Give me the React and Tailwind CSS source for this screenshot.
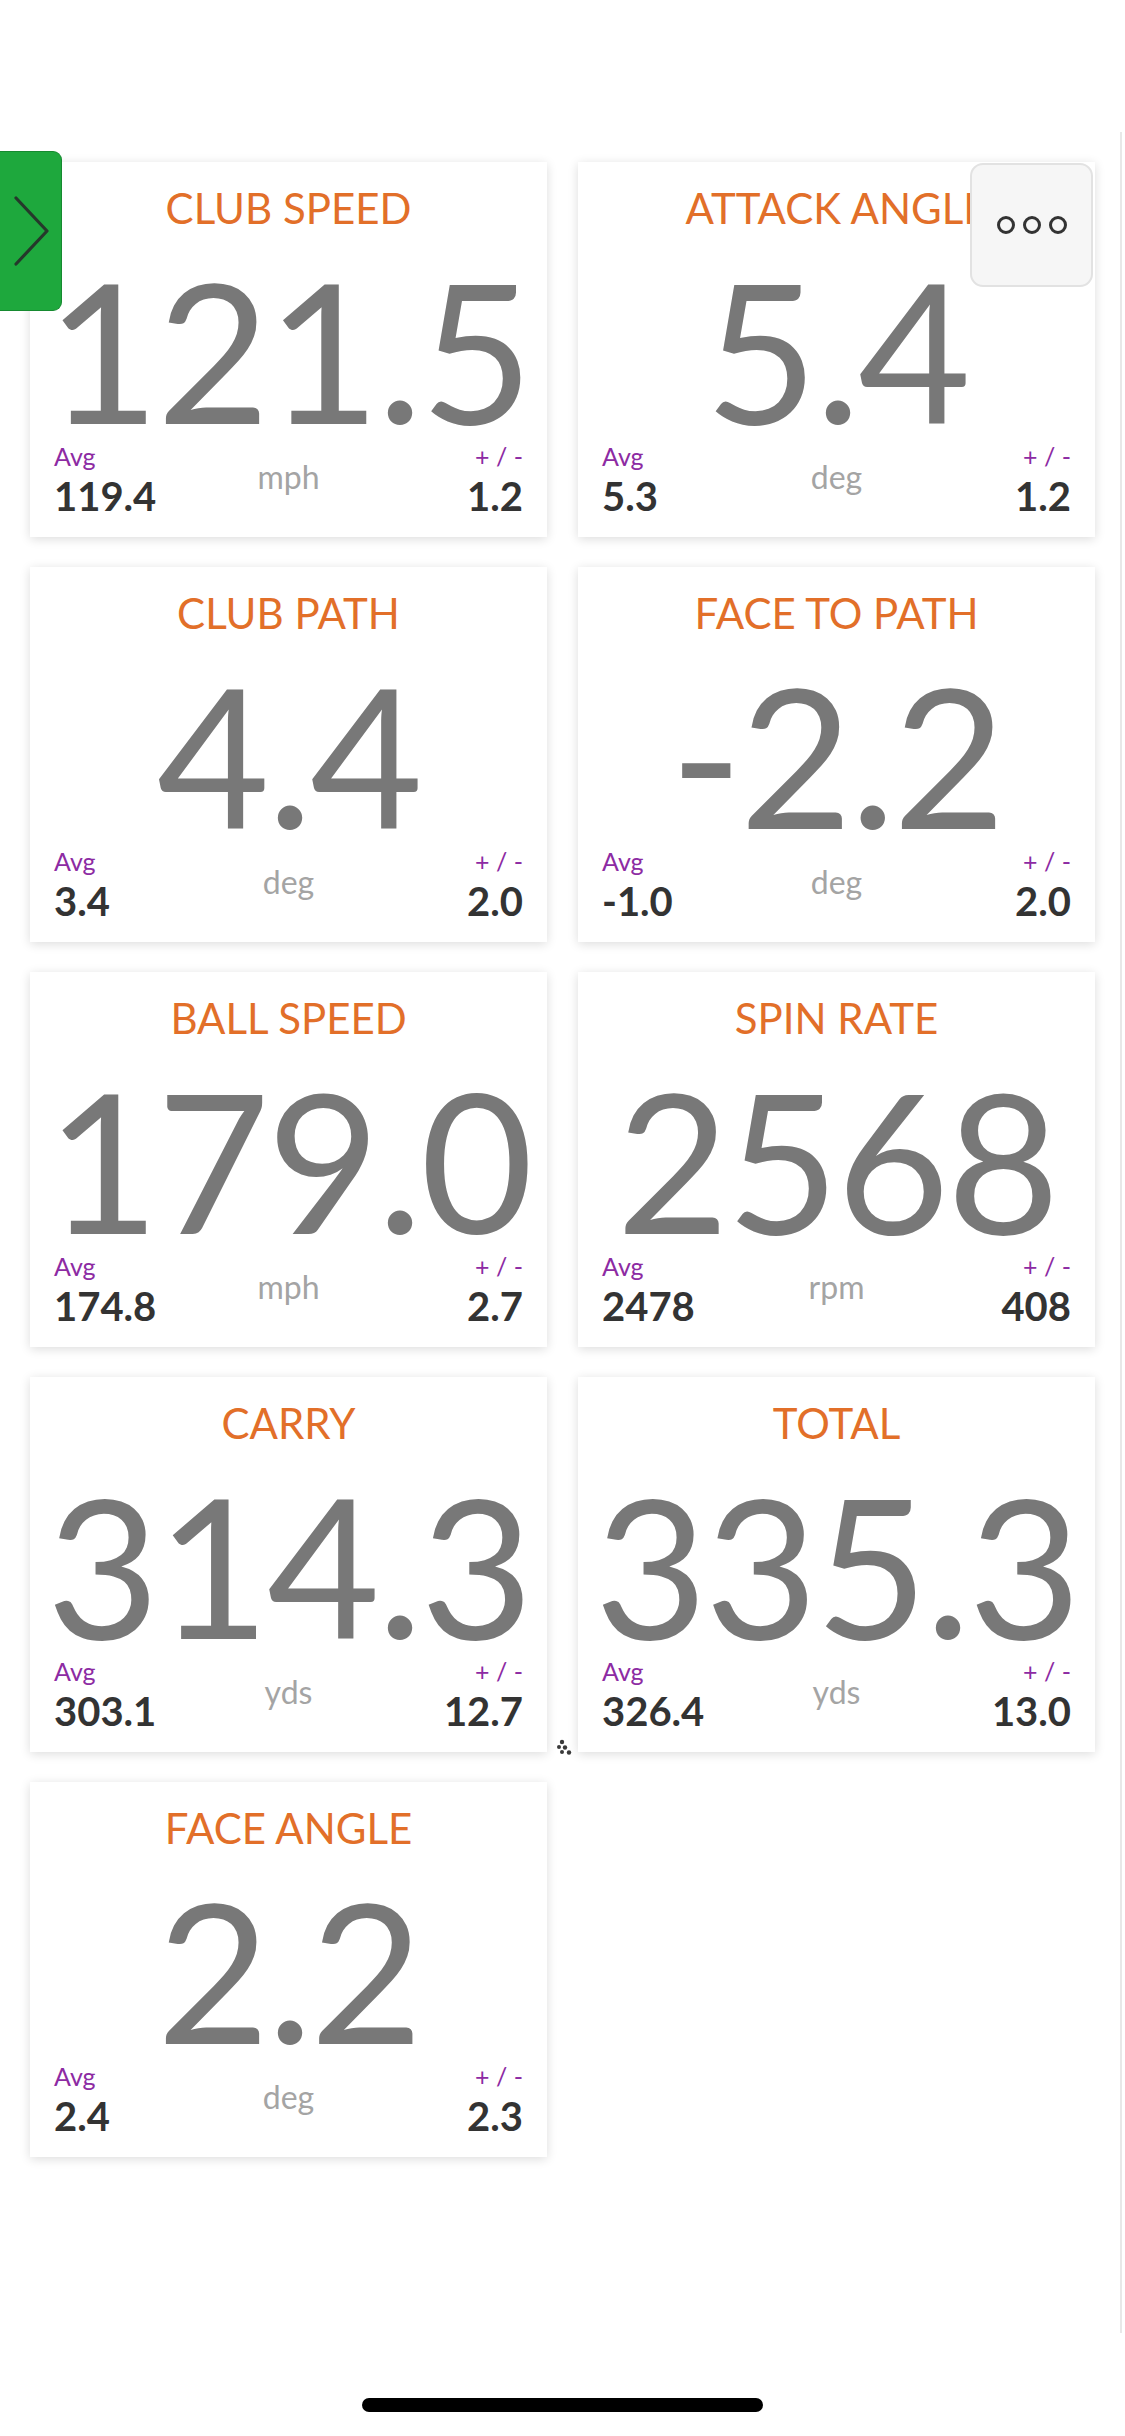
import React from 'react';

const metrics = [
    { title: 'CLUB SPEED', value: '121.5', unit: 'mph', avg: '119.4', dev: '1.2' },
    { title: 'ATTACK ANGLE', value: '5.4', unit: 'deg', avg: '5.3', dev: '1.2' },
    { title: 'CLUB PATH', value: '4.4', unit: 'deg', avg: '3.4', dev: '2.0' },
    { title: 'FACE TO PATH', value: '-2.2', unit: 'deg', avg: '-1.0', dev: '2.0' },
    { title: 'BALL SPEED', value: '179.0', unit: 'mph', avg: '174.8', dev: '2.7' },
    { title: 'SPIN RATE', value: '2568', unit: 'rpm', avg: '2478', dev: '408' },
    { title: 'CARRY', value: '314.3', unit: 'yds', avg: '303.1', dev: '12.7' },
    { title: 'TOTAL', value: '335.3', unit: 'yds', avg: '326.4', dev: '13.0' },
    { title: 'FACE ANGLE', value: '2.2', unit: 'deg', avg: '2.4', dev: '2.3' },
];

function MetricCard({ title, value, unit, avg, dev }) {
    return (
        <div className="h-[375px] bg-white shadow-[0_2px_10px_rgba(0,0,0,0.14)] flex flex-col px-[24px] pt-[21px] overflow-hidden">
            <div className="text-center text-[42px] leading-[50px] text-[#e26f29] whitespace-nowrap">{title}</div>
            <div className="-mx-[24px] mt-[25px] text-center text-[195px] leading-[183px] tracking-[-0.015em] text-[#787878] whitespace-nowrap">
                {value}
            </div>
            <div className="grid grid-cols-[1fr_auto_1fr] items-start">
                <div className="flex flex-col items-start">
                    <span className="text-[25px] leading-[30px] text-[#8d2ba3]">Avg</span>
                    <span className="mt-[1px] text-[40px] leading-[48px] font-bold text-[#333333]">{avg}</span>
                </div>
                <span className="mt-[17px] text-[32px] leading-[38px] text-[#a4a4a4]">{unit}</span>
                <div className="flex flex-col items-end">
                    <span className="text-[25px] leading-[30px] text-[#8d2ba3]">+ / -</span>
                    <span className="mt-[1px] text-[40px] leading-[48px] font-bold text-[#333333]">{dev}</span>
                </div>
            </div>
        </div>
    );
}

export default function App() {
    return (
        <div className="relative w-[1125px] h-[2436px] bg-white overflow-hidden font-['Lato','Liberation_Sans',sans-serif] flex flex-col">
            <div className="h-[132px] shrink-0" />

            {/* metrics panel */}
            <div className="relative w-[1122px] h-[2201px] shrink-0 border-r-2 border-[#e8e8e8]">
                <div className="grid grid-cols-[517px_517px] gap-x-[31px] gap-y-[30px] pl-[30px] pt-[30px]">
                    {metrics.map((m) => (
                        <MetricCard key={m.title} {...m} />
                    ))}
                </div>

                {/* grip glyph between cards */}
                <svg className="absolute left-[555px] top-[1607px]" width="18" height="17" viewBox="0 0 18 17">
                    <circle cx="7" cy="3" r="2.2" fill="#3a3a3a" />
                    <circle cx="4" cy="8" r="2" fill="#3a3a3a" />
                    <circle cx="10" cy="8.5" r="2.2" fill="#3a3a3a" />
                    <circle cx="7" cy="13" r="2" fill="#3a3a3a" />
                    <circle cx="14" cy="13.5" r="2.2" fill="#3a3a3a" />
                </svg>
            </div>

            {/* side drawer tab */}
            <div className="absolute left-0 top-[151px] w-[62px] h-[160px] bg-[#1ea83d] border border-l-0 border-[#168a30] rounded-r-[9px] flex items-center justify-center">
                <svg width="40" height="72" viewBox="0 0 40 72" fill="none">
                    <path d="M5 3 L36 36 L5 69" stroke="#25382b" strokeWidth="3.2" strokeLinecap="round" strokeLinejoin="round" />
                </svg>
            </div>

            {/* options button */}
            <div className="absolute left-[970px] top-[163px] w-[123px] h-[124px] bg-[#f6f6f6] border-2 border-[#e2e2e2] rounded-[13px] flex items-center justify-center gap-[8px]">
                <span className="w-[18px] h-[18px] rounded-full border-[3px] border-[#333333]" />
                <span className="w-[18px] h-[18px] rounded-full border-[3px] border-[#333333]" />
                <span className="w-[18px] h-[18px] rounded-full border-[3px] border-[#333333]" />
            </div>

            {/* home indicator */}
            <div className="flex justify-center pt-[65px]">
                <div className="w-[401px] h-[14px] rounded-full bg-black" />
            </div>
        </div>
    );
}
